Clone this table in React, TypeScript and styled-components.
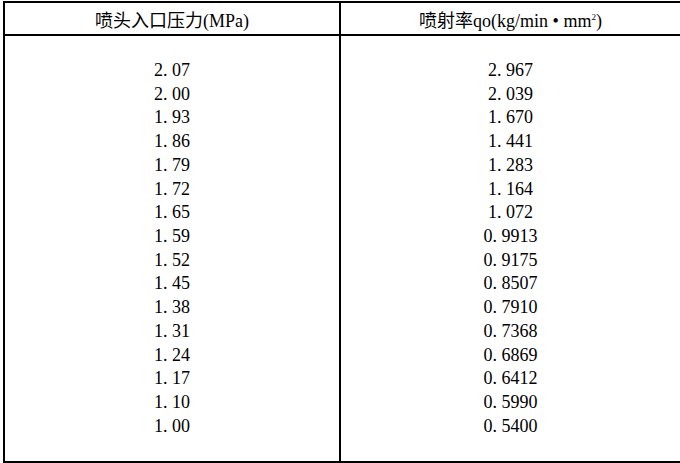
import React from 'react';
import styled, { createGlobalStyle } from 'styled-components';

const Global = createGlobalStyle`
  html, body {
    margin: 0;
    padding: 0;
    background: #fff;
  }
  body {
    font-family: 'Liberation Serif', 'Noto Sans CJK SC', serif;
    color: #000;
  }
`;

const Table = styled.table`
  border-collapse: collapse;
  margin: 1px 0 0 3px;
  width: 673px;
  table-layout: fixed;
`;

const HeadCell = styled.th`
  border: 2px solid #000;
  height: 31px;
  padding: 0;
  font-weight: normal;
  font-size: 18px;
  text-align: center;
  vertical-align: middle;
  width: ${props => props.width}px;
`;

const Cjk = styled.span`
  font-family: 'Noto Sans CJK SC', sans-serif;
  font-size: 18px;
`;

const Sup = styled.sup`
  font-size: 9px;
  vertical-align: 7px;
  line-height: 0;
`;

const BodyCell = styled.td`
  border: 2px solid #000;
  padding: 23px 0 22px;
  text-align: center;
  vertical-align: top;
`;

const Value = styled.div`
  font-size: 18px;
  line-height: 23.73px;
  height: 23.73px;
`;

const Dot = styled.span`
  display: inline-block;
  width: 0.5em;
  text-align: left;
`;

const pressures = ['2.07', '2.00', '1.93', '1.86', '1.79', '1.72', '1.65', '1.59', '1.52', '1.45', '1.38', '1.31', '1.24', '1.17', '1.10', '1.00'];
const rates = ['2.967', '2.039', '1.670', '1.441', '1.283', '1.164', '1.072', '0.9913', '0.9175', '0.8507', '0.7910', '0.7368', '0.6869', '0.6412', '0.5990', '0.5400'];

function Num({ v }: { v: string }) {
    const [a, b] = v.split('.');
    return <Value>{a}<Dot>.</Dot>{b}</Value>;
}

export default function App() {
    return (
        <>
            <Global />
            <Table>
                <thead>
                    <tr>
                        <HeadCell width={334}><Cjk>喷头入口压力</Cjk>(MPa)</HeadCell>
                        <HeadCell width={339}><Cjk>喷射率</Cjk>qo(kg/min • mm<Sup>2</Sup>)</HeadCell>
                    </tr>
                </thead>
                <tbody>
                    <tr>
                        <BodyCell>{pressures.map(p => <Num key={p} v={p} />)}</BodyCell>
                        <BodyCell>{rates.map(r => <Num key={r} v={r} />)}</BodyCell>
                    </tr>
                </tbody>
            </Table>
        </>
    );
}
